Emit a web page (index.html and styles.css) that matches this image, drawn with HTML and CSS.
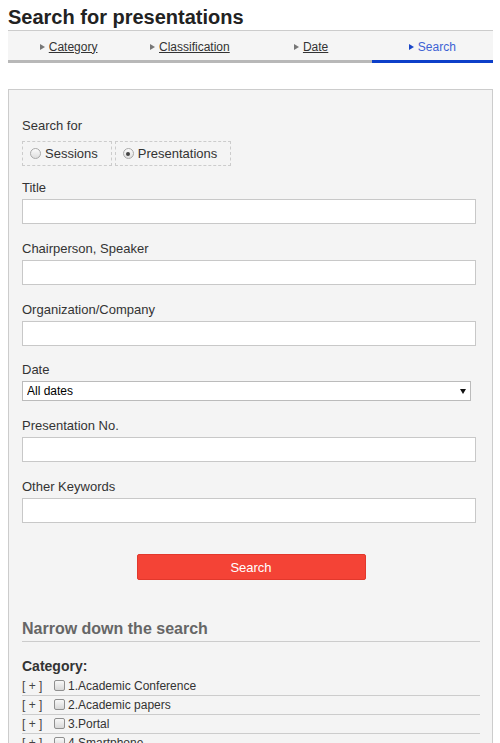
FILE: index.html
```html
<!DOCTYPE html>
<html lang="en">
<head>
<meta charset="utf-8">
<title>Search for presentations</title>
<link rel="stylesheet" href="styles.css">
</head>
<body>
<h1 class="page-title">Search for presentations</h1>
<nav class="steps">
  <a class="step" href="#"><span class="arrow"></span><span class="step-text">Category</span></a>
  <a class="step" href="#"><span class="arrow"></span><span class="step-text">Classification</span></a>
  <a class="step" href="#"><span class="arrow"></span><span class="step-text">Date</span></a>
  <a class="step active" href="#"><span class="arrow"></span><span class="step-text">Search</span></a>
</nav>
<form class="panel">
  <div class="label first">Search for</div>
  <div class="radios">
    <label class="radio-box"><input type="radio" name="kind"><span>Sessions</span></label>
    <label class="radio-box"><input type="radio" name="kind" checked><span>Presentations</span></label>
  </div>
  <div class="field">
    <div class="label">Title</div>
    <input class="text" type="text">
  </div>
  <div class="field">
    <div class="label">Chairperson, Speaker</div>
    <input class="text" type="text">
  </div>
  <div class="field">
    <div class="label">Organization/Company</div>
    <input class="text" type="text">
  </div>
  <div class="field date-field">
    <div class="label">Date</div>
    <div class="select-wrap">
      <select class="select"><option>All dates</option></select>
      <span class="select-arrow"></span>
    </div>
  </div>
  <div class="field">
    <div class="label">Presentation No.</div>
    <input class="text" type="text">
  </div>
  <div class="field">
    <div class="label">Other Keywords</div>
    <input class="text" type="text">
  </div>
  <div class="btn-row"><button type="button" class="search-btn">Search</button></div>
  <h2 class="narrow">Narrow down the search</h2>
  <div class="cat-title">Category:</div>
  <ul class="cat-list">
    <li class="cat-row"><span class="expand">[ + ]</span><input type="checkbox" class="cb"><span>1.Academic Conference</span></li>
    <li class="cat-row"><span class="expand">[ + ]</span><input type="checkbox" class="cb"><span>2.Academic papers</span></li>
    <li class="cat-row"><span class="expand">[ + ]</span><input type="checkbox" class="cb"><span>3.Portal</span></li>
    <li class="cat-row"><span class="expand">[ + ]</span><input type="checkbox" class="cb"><span>4.Smartphone</span></li>
    <li class="cat-row"><span class="expand">[ + ]</span><input type="checkbox" class="cb"><span>5.Other</span></li>
  </ul>
</form>
</body>
</html>
```
FILE: styles.css
```css
html, body {
  background: #fff;
}
body {
  margin: 6px 7px 8px 8px;
  font-family: "Liberation Sans", Arial, sans-serif;
  color: #333;
}
.page-title {
  margin: 0 0 2px 0;
  font-size: 20px;
  line-height: 22px;
  font-weight: bold;
  color: #222;
}
.steps {
  display: flex;
  border-top: 1px solid #ccc;
  background: #f5f5f5;
}
.step {
  flex: 1 1 0;
  display: flex;
  align-items: center;
  justify-content: center;
  height: 27px;
  padding-top: 2px;
  border-bottom: 3px solid #b8b8b8;
  font-size: 12px;
  color: #333;
  text-decoration: none;
}
.step-text {
  text-decoration: underline;
}
.arrow {
  width: 0;
  height: 0;
  border-left: 5px solid #777;
  border-top: 3px solid transparent;
  border-bottom: 3px solid transparent;
  margin-right: 4px;
}
.step.active {
  border-bottom-color: #0d3fc9;
  color: #3d62d4;
}
.step.active .step-text {
  text-decoration: none;
}
.step.active .arrow {
  border-left-color: #1a46c8;
}
.panel {
  margin-top: 26px;
  border: 1px solid #ccc;
  background: #f4f4f4;
  padding: 27px 12px 0 13px;
}
.label {
  font-size: 13px;
  line-height: 18px;
  color: #333;
  padding-top: 1px;
  margin-bottom: 2px;
}
.label.first {
  padding-top: 0;
}
.radios {
  display: flex;
  gap: 3px;
  margin-top: 6px;
}
.radio-box {
  display: flex;
  align-items: center;
  height: 23px;
  border: 1px dashed #ccc;
  padding: 0 13px 0 7px;
  font-size: 13px;
  color: #333;
}
.radio-box input {
  appearance: none;
  -webkit-appearance: none;
  width: 11px;
  height: 11px;
  margin: 0 4px 0 0;
  border: 1px solid #a9a9a9;
  border-radius: 50%;
  background: linear-gradient(#fbfbfb, #dedede);
  box-sizing: border-box;
  position: relative;
}
.radio-box input:checked::after {
  content: "";
  position: absolute;
  left: 2.5px;
  top: 2.5px;
  width: 4px;
  height: 4px;
  border-radius: 50%;
  background: #444;
}
.field {
  margin-top: 12px;
}
.field + .field {
  margin-top: 15px;
}
.field.date-field {
  margin-top: 14px;
}
.field.date-field + .field {
  margin-top: 15px;
}
.text {
  display: block;
  box-sizing: border-box;
  width: 454px;
  height: 25px;
  margin: 0;
  border: 1px solid #c8c8c8;
  background: #fff;
  font-family: inherit;
  font-size: 13px;
  padding: 0 4px;
}
.select-wrap {
  position: relative;
  width: 449px;
}
.select {
  appearance: none;
  -webkit-appearance: none;
  display: block;
  box-sizing: border-box;
  width: 449px;
  height: 20px;
  margin: 0;
  border: 1px solid #bbb;
  border-radius: 0;
  background: #fff;
  font-family: inherit;
  font-size: 12px;
  color: #000;
  padding: 0 4px;
}
.select-arrow {
  position: absolute;
  right: 5px;
  top: 8px;
  width: 0;
  height: 0;
  border-top: 5px solid #111;
  border-left: 3px solid transparent;
  border-right: 3px solid transparent;
}
.btn-row {
  display: flex;
  justify-content: center;
  margin-top: 31px;
}
.search-btn {
  width: 229px;
  height: 26px;
  background: #f44336;
  border: 1px solid #e2382c;
  border-radius: 2px;
  color: #fff;
  font-family: inherit;
  font-size: 13px;
  padding: 0;
}
.narrow {
  margin: 38px 0 0 0;
  font-size: 16px;
  line-height: 20px;
  font-weight: bold;
  color: #666;
  padding-top: 1px;
  padding-bottom: 2px;
  border-bottom: 1px solid #ccc;
}
.cat-title {
  margin-top: 15px;
  font-size: 14px;
  line-height: 18px;
  font-weight: bold;
  color: #333;
}
.cat-list {
  list-style: none;
  margin: 2px 0 0 0;
  padding: 0;
}
.cat-row {
  display: flex;
  align-items: center;
  height: 18px;
  border-bottom: 1px solid #ccc;
  font-size: 12px;
  color: #333;
}
.expand {
  color: #444;
  width: 32px;
}
.cb {
  appearance: none;
  -webkit-appearance: none;
  box-sizing: border-box;
  width: 11px;
  height: 11px;
  margin: 0 3px 0 0;
  border: 1px solid #8f8f8f;
  border-radius: 2px;
  background: linear-gradient(#f8f8f8, #d8d8d8);
  position: relative;
  top: -1px;
}
```
